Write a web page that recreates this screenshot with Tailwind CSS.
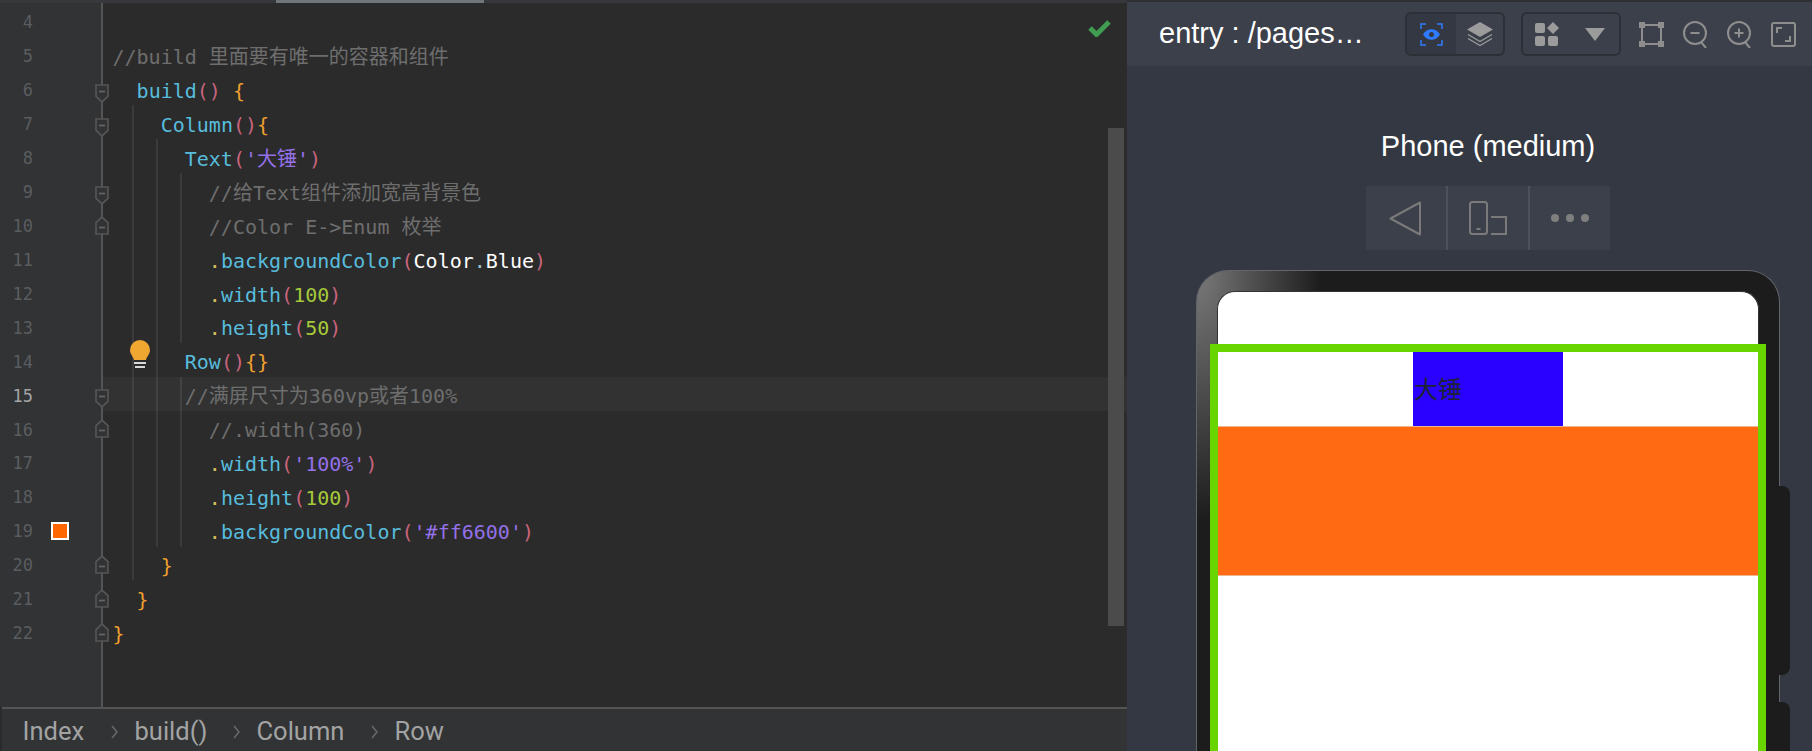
<!DOCTYPE html>
<html lang="zh">
<head>
  <meta charset="UTF-8" />
  <title>Index - build</title>
  <script src="https://cdn.jsdelivr.net/npm/@tailwindcss/browser@4"></script>
</head>
<body class="w-[1812px] h-[751px] overflow-hidden flex bg-[#2b2b2b] font-['Liberation_Sans',sans-serif]">
  <svg class="hidden">
    <symbol id="fold-down" viewBox="0 0 14 19"><path d="M1 1h12v11.5L7 18 1 12.5Z" fill="#313335" stroke="#555" stroke-width="1.7"/><path d="M4 7.5h6" stroke="#666" stroke-width="1.7"/></symbol>
    <symbol id="fold-up" viewBox="0 0 14 19"><path d="M1 18h12V6.500L7 1 1 6.500Z" fill="#313335" stroke="#555" stroke-width="1.7"/><path d="M4 11.500h6" stroke="#666" stroke-width="1.7"/></symbol>
  </svg>

  <!-- Editor -->
  <div class="w-[1127px] h-full flex flex-col shrink-0">
    <div class="h-[3px] bg-[#36383b] shrink-0 flex">
      <div class="ml-[276px] w-[208px] bg-[#6f767c]"></div>
    </div>
    <div class="relative flex-1 flex flex-col pt-[0.55px] font-['DejaVu_Sans_Mono','Noto_Sans_CJK_SC',monospace] text-[20px] whitespace-pre text-[#6e6e6e]">
      <!-- Gutter runs down to the breadcrumb -->
      <div class="absolute left-0 top-0 bottom-0 w-[103px] bg-[#313335] border-r-2 border-[#555]"></div>

      <!-- Indent guides -->
      <div class="absolute left-[132px] top-[102px] h-[475px] w-[2px] bg-[#3b3b3b]"></div>
      <div class="absolute left-[156px] top-[136px] h-[408px] w-[2px] bg-[#3b3b3b]"></div>
      <div class="absolute left-[180px] top-[170px] h-[170px] w-[2px] bg-[#3b3b3b]"></div>
      <div class="absolute left-[180px] top-[374px] h-[170px] w-[2px] bg-[#3b3b3b]"></div>

      <div class="relative flex flex-col">
        <div class="h-[33.95px] pt-[5px] flex items-center"><span class="w-[33px] text-right text-[17px] text-[#5a5d60]">4</span></div>

        <div class="h-[33.95px] pt-[5px] flex items-center"><span class="w-[33px] text-right text-[17px] text-[#5a5d60]">5</span><span class="ml-[79.5px]">//build 里面要有唯一的容器和组件</span></div>

        <div class="relative h-[33.95px] pt-[5px] flex items-center"><span class="w-[33px] text-right text-[17px] text-[#5a5d60]">6</span><svg class="absolute left-[95px] top-[12.500px] w-[14px] h-[19px]"><use href="#fold-down"/></svg><span class="ml-[79.5px]">  <span class="text-[#58bcdc]">build</span><span class="text-[#c9647c]">()</span> <span class="text-[#f0a030]">{</span></span></div>

        <div class="relative h-[33.95px] pt-[5px] flex items-center"><span class="w-[33px] text-right text-[17px] text-[#5a5d60]">7</span><svg class="absolute left-[95px] top-[12.500px] w-[14px] h-[19px]"><use href="#fold-down"/></svg><span class="ml-[79.5px]">    <span class="text-[#58bcdc]">Column</span><span class="text-[#c9647c]">()</span><span class="text-[#f0a030]">{</span></span></div>

        <div class="h-[33.95px] pt-[5px] flex items-center"><span class="w-[33px] text-right text-[17px] text-[#5a5d60]">8</span><span class="ml-[79.5px]">      <span class="text-[#58bcdc]">Text</span><span class="text-[#c9647c]">(</span><span class="text-[#9471e8]">'大锤'</span><span class="text-[#c9647c]">)</span></span></div>

        <div class="relative h-[33.95px] pt-[5px] flex items-center"><span class="w-[33px] text-right text-[17px] text-[#5a5d60]">9</span><svg class="absolute left-[95px] top-[12.500px] w-[14px] h-[19px]"><use href="#fold-down"/></svg><span class="ml-[79.5px]">        //给Text组件添加宽高背景色</span></div>

        <div class="relative h-[33.95px] pt-[5px] flex items-center"><span class="w-[33px] text-right text-[17px] text-[#5a5d60]">10</span><svg class="absolute left-[95px] top-[8.500px] w-[14px] h-[19px]"><use href="#fold-up"/></svg><span class="ml-[79.5px]">        //Color E->Enum 枚举</span></div>

        <div class="h-[33.95px] pt-[5px] flex items-center"><span class="w-[33px] text-right text-[17px] text-[#5a5d60]">11</span><span class="ml-[79.5px]">        <span class="text-[#d8c05e]">.</span><span class="text-[#58bcdc]">backgroundColor</span><span class="text-[#c9647c]">(</span><span class="text-white">Color</span><span class="text-[#9fc4d0]">.</span><span class="text-white">Blue</span><span class="text-[#c9647c]">)</span></span></div>

        <div class="h-[33.95px] pt-[5px] flex items-center"><span class="w-[33px] text-right text-[17px] text-[#5a5d60]">12</span><span class="ml-[79.5px]">        <span class="text-[#d8c05e]">.</span><span class="text-[#58bcdc]">width</span><span class="text-[#c9647c]">(</span><span class="text-[#a6c93a]">100</span><span class="text-[#c9647c]">)</span></span></div>

        <div class="h-[33.95px] pt-[5px] flex items-center"><span class="w-[33px] text-right text-[17px] text-[#5a5d60]">13</span><span class="ml-[79.5px]">        <span class="text-[#d8c05e]">.</span><span class="text-[#58bcdc]">height</span><span class="text-[#c9647c]">(</span><span class="text-[#a6c93a]">50</span><span class="text-[#c9647c]">)</span></span></div>

        <div class="relative h-[33.95px] pt-[5px] flex items-center"><span class="w-[33px] text-right text-[17px] text-[#5a5d60]">14</span>
          <!-- Intention bulb -->
          <svg class="absolute left-[130px] top-[-3px] w-[20px] h-[29px]" viewBox="0 0 20 29"><path d="M10 0a10 10 0 0 1 10 10c0 4-3 6-4 10H4C3 16 0 14 0 10A10 10 0 0 1 10 0Z" fill="#f0a732"/><path d="M4 23h12M5 27h10" stroke="#d8d8d8" stroke-width="2"/></svg>
          <span class="ml-[79.5px]">      <span class="text-[#58bcdc]">Row</span><span class="text-[#c9647c]">()</span><span class="text-[#f0a030]">{}</span></span></div>

        <div class="relative h-[33.95px] pt-[5px] flex items-center"><div class="absolute left-[103px] right-0 inset-y-0 bg-white/[0.035]"></div><span class="w-[33px] text-right text-[17px] text-[#a4a4a4]">15</span><svg class="absolute left-[95px] top-[12.500px] w-[14px] h-[19px]"><use href="#fold-down"/></svg><span class="relative ml-[79.5px]">      //满屏尺寸为360vp或者100%</span></div>

        <div class="relative h-[33.95px] pt-[5px] flex items-center"><span class="w-[33px] text-right text-[17px] text-[#5a5d60]">16</span><svg class="absolute left-[95px] top-[8.500px] w-[14px] h-[19px]"><use href="#fold-up"/></svg><span class="ml-[79.5px]">        //.width(360)</span></div>

        <div class="h-[33.95px] pt-[5px] flex items-center"><span class="w-[33px] text-right text-[17px] text-[#5a5d60]">17</span><span class="ml-[79.5px]">        <span class="text-[#d8c05e]">.</span><span class="text-[#58bcdc]">width</span><span class="text-[#c9647c]">(</span><span class="text-[#9471e8]">'100%'</span><span class="text-[#c9647c]">)</span></span></div>

        <div class="h-[33.95px] pt-[5px] flex items-center"><span class="w-[33px] text-right text-[17px] text-[#5a5d60]">18</span><span class="ml-[79.5px]">        <span class="text-[#d8c05e]">.</span><span class="text-[#58bcdc]">height</span><span class="text-[#c9647c]">(</span><span class="text-[#a6c93a]">100</span><span class="text-[#c9647c]">)</span></span></div>

        <div class="relative h-[33.95px] pt-[5px] flex items-center"><span class="w-[33px] text-right text-[17px] text-[#5a5d60]">19</span><div class="absolute left-[51px] top-[9px] size-[18px] bg-[#ff6600] border-2 border-white"></div><span class="ml-[79.5px]">        <span class="text-[#d8c05e]">.</span><span class="text-[#58bcdc]">backgroundColor</span><span class="text-[#c9647c]">(</span><span class="text-[#9471e8]">'#ff6600'</span><span class="text-[#c9647c]">)</span></span></div>

        <div class="relative h-[33.95px] pt-[5px] flex items-center"><span class="w-[33px] text-right text-[17px] text-[#5a5d60]">20</span><svg class="absolute left-[95px] top-[8.500px] w-[14px] h-[19px]"><use href="#fold-up"/></svg><span class="ml-[79.5px] text-[#f0a030]">    }</span></div>

        <div class="relative h-[33.95px] pt-[5px] flex items-center"><span class="w-[33px] text-right text-[17px] text-[#5a5d60]">21</span><svg class="absolute left-[95px] top-[8.500px] w-[14px] h-[19px]"><use href="#fold-up"/></svg><span class="ml-[79.5px] text-[#f0a030]">  }</span></div>

        <div class="relative h-[33.95px] pt-[5px] flex items-center"><span class="w-[33px] text-right text-[17px] text-[#5a5d60]">22</span><svg class="absolute left-[95px] top-[8.500px] w-[14px] h-[19px]"><use href="#fold-up"/></svg><span class="ml-[79.5px] text-[#f0a030]">}</span></div>
      </div>

      <!-- Inspection check -->
      <svg class="absolute left-[1088px] top-[16px] w-[23px] h-[18px]" viewBox="0 0 23 18"><path d="M2 9l6.500 6.500L21 3" fill="none" stroke="#3f9c50" stroke-width="5"/></svg>
      <!-- Scrollbar -->
      <div class="absolute left-[1108px] top-[125px] w-[16px] h-[498px] bg-[#4b4b4b]"></div>
    </div>

    <!-- Breadcrumb -->
    <div class="h-[44px] shrink-0 ml-[2px] pt-[3px] bg-[#313335] border-t-2 border-[#555] flex items-center pl-[20.5px] font-['Roboto',sans-serif] text-[25.5px] text-[#a3a3a3]">
      <span class="w-[88px]">Index</span>
      <svg class="w-[24px] h-[14px]" viewBox="0 0 24 14"><path d="M1 1l5 6-5 6" fill="none" stroke="#6a6a6a" stroke-width="1.500"/></svg>
      <span class="w-[98px]">build()</span>
      <svg class="w-[24px] h-[14px]" viewBox="0 0 24 14"><path d="M1 1l5 6-5 6" fill="none" stroke="#6a6a6a" stroke-width="1.500"/></svg>
      <span class="w-[114px]">Column</span>
      <svg class="w-[24px] h-[14px]" viewBox="0 0 24 14"><path d="M1 1l5 6-5 6" fill="none" stroke="#6a6a6a" stroke-width="1.500"/></svg>
      <span>Row</span>
    </div>
  </div>

  <!-- Previewer -->
  <div class="flex-1 h-full bg-[#343842] flex flex-col overflow-hidden">
    <div class="h-[66px] shrink-0 bg-[#3c404a] border-t-2 border-[#2e2f33] flex items-center pl-[32px] text-white">
      <span class="w-[246px] text-[29px] whitespace-nowrap">entry : /pages…</span>

      <div class="w-[100px] h-[44px] flex rounded-md border-2 border-[#2c2f36] overflow-hidden shrink-0">
        <div class="w-[49px] bg-[#343842] flex items-center justify-center">
          <svg class="w-[23px] h-[23px]" viewBox="0 0 23 23" fill="none"><path d="M1 6V1h5M17 1h5v5M22 17v5h-5M6 22H1v-5" stroke="#2f7bff" stroke-width="1.500"/><path d="M3 11.500C7 4.500 16 4.500 20 11.500 16 18.500 7 18.500 3 11.500Z" fill="#2f7bff"/><circle cx="11.500" cy="11.500" r="2.500" fill="#343842"/></svg>
        </div>
        <div class="flex-1 flex items-center justify-center">
          <svg class="w-[26px] h-[24px]" viewBox="0 0 26 24" fill="none"><path d="M13 0l13 7.500-13 7.500L0 7.500Z" fill="#9b9b9b"/><path d="M1 12.500l12 7 12-7M1 16.500l12 7 12-7" stroke="#9b9b9b" stroke-width="1.300"/></svg>
        </div>
      </div>

      <div class="ml-[16px] w-[100px] h-[44px] flex items-center rounded-md border-2 border-[#2c2f36] pl-[12px] shrink-0">
        <svg class="w-[24px] h-[24px]" viewBox="0 0 24 24" fill="#9b9b9b"><rect x="0" y="1" width="10" height="10" rx="2"/><rect x="0" y="14" width="10" height="10" rx="2"/><rect x="13" y="14" width="10" height="10" rx="2"/><path d="M18 0l6 6-6 6-6-6Z"/></svg>
        <svg class="ml-[26px] w-[20px] h-[13px]" viewBox="0 0 20 13" fill="#9b9b9b"><path d="M0 0h20L10 13Z"/></svg>
      </div>

      <svg class="ml-[18px] w-[25px] h-[25px] shrink-0" viewBox="0 0 25 25" fill="none"><path d="M3 3h19v19H3Z" stroke="#8e8e8e" stroke-width="2"/><path d="M0 0h6v6H0ZM19 0h6v6h-6ZM0 19h6v6H0ZM19 19h6v6h-6Z" fill="#8e8e8e"/></svg>
      <svg class="ml-[19px] w-[24px] h-[27px] shrink-0" viewBox="0 0 24 27" fill="none" stroke="#8e8e8e" stroke-width="2"><circle cx="12" cy="12" r="11"/><path d="M7.500 12h9M18 21l5 6"/></svg>
      <svg class="ml-[20px] w-[24px] h-[27px] shrink-0" viewBox="0 0 24 27" fill="none" stroke="#8e8e8e" stroke-width="2"><circle cx="12" cy="12" r="11"/><path d="M7.500 12h9M12 7.500v9M18 21l5 6"/></svg>
      <svg class="ml-[20px] w-[25px] h-[25px] shrink-0" viewBox="0 0 25 25" fill="none" stroke="#8e8e8e" stroke-width="2"><rect x="1" y="1" width="23" height="23" rx="2"/><path d="M6 11V6h5M19 14v5h-5"/></svg>
    </div>

    <div class="flex flex-col items-center pl-[37px]">
      <div class="mt-[63px] h-[34px] leading-[34px] text-[29px] text-white">Phone (medium)</div>

      <div class="mt-[23px] w-[244px] h-[64px] flex bg-[#3c404a] divide-x-2 divide-[#4d5159]">
        <div class="w-[82px] flex items-center pl-[23px]">
          <svg class="w-[32px] h-[35px]" viewBox="0 0 32 35" fill="none"><path d="M31 1.500v32L1.500 17.500Z" stroke="#7a7a7a" stroke-width="2" stroke-linejoin="round"/></svg>
        </div>
        <div class="w-[82px] flex items-center justify-center">
          <svg class="w-[39px] h-[34px]" viewBox="0 0 39 34" fill="none" stroke="#7a7a7a" stroke-width="2"><rect x="1" y="1" width="17" height="32" rx="2.500"/><path d="M7.500 28h4"/><path d="M22 16h15v17H22"/></svg>
        </div>
        <div class="w-[80px] flex items-center justify-center gap-[7px]">
          <div class="size-[8px] rounded-full bg-[#7f7f7f]"></div>
          <div class="size-[8px] rounded-full bg-[#7f7f7f]"></div>
          <div class="size-[8px] rounded-full bg-[#7f7f7f]"></div>
        </div>
      </div>

      <!-- Device frame -->
      <div class="relative mt-[20px] w-[584px] h-[520px] shrink-0 px-[20px] pt-[20px] rounded-t-[32px] border border-b-0 border-[#62646a] bg-[radial-gradient(ellipse_125px_250px_at_0_0,#7a7a7a,#1c1c1c)] bg-[#1c1c1c]">
        <div class="h-full flex flex-col bg-white rounded-t-[18px] border-t border-x border-[#333]">
          <div class="h-[60px] shrink-0"></div>
          <div class="h-[74px] shrink-0 flex justify-center">
            <div class="w-[150px] bg-[#2a00ff] flex items-center pb-[2px] pl-[1px] text-[24px] text-[#1c2433] font-['Noto_Sans_CJK_SC',sans-serif]">大锤</div>
          </div>
          <div class="h-[150px] shrink-0 bg-[#ff6a13] border-y border-[#f0b48c]"></div>
        </div>
        <!-- Component selection box -->
        <div class="absolute left-[13px] right-[13px] top-[73px] bottom-0 border-8 border-b-0 border-[#68d400]"></div>
        <!-- Side buttons -->
        <div class="absolute left-[582px] top-[215px] w-[11px] h-[189px] rounded-r-lg bg-[#1c1c1c]"></div>
        <div class="absolute left-[582px] top-[431px] w-[11px] h-[120px] rounded-r-lg bg-[#1c1c1c]"></div>
      </div>
    </div>
  </div>
</body>
</html>
